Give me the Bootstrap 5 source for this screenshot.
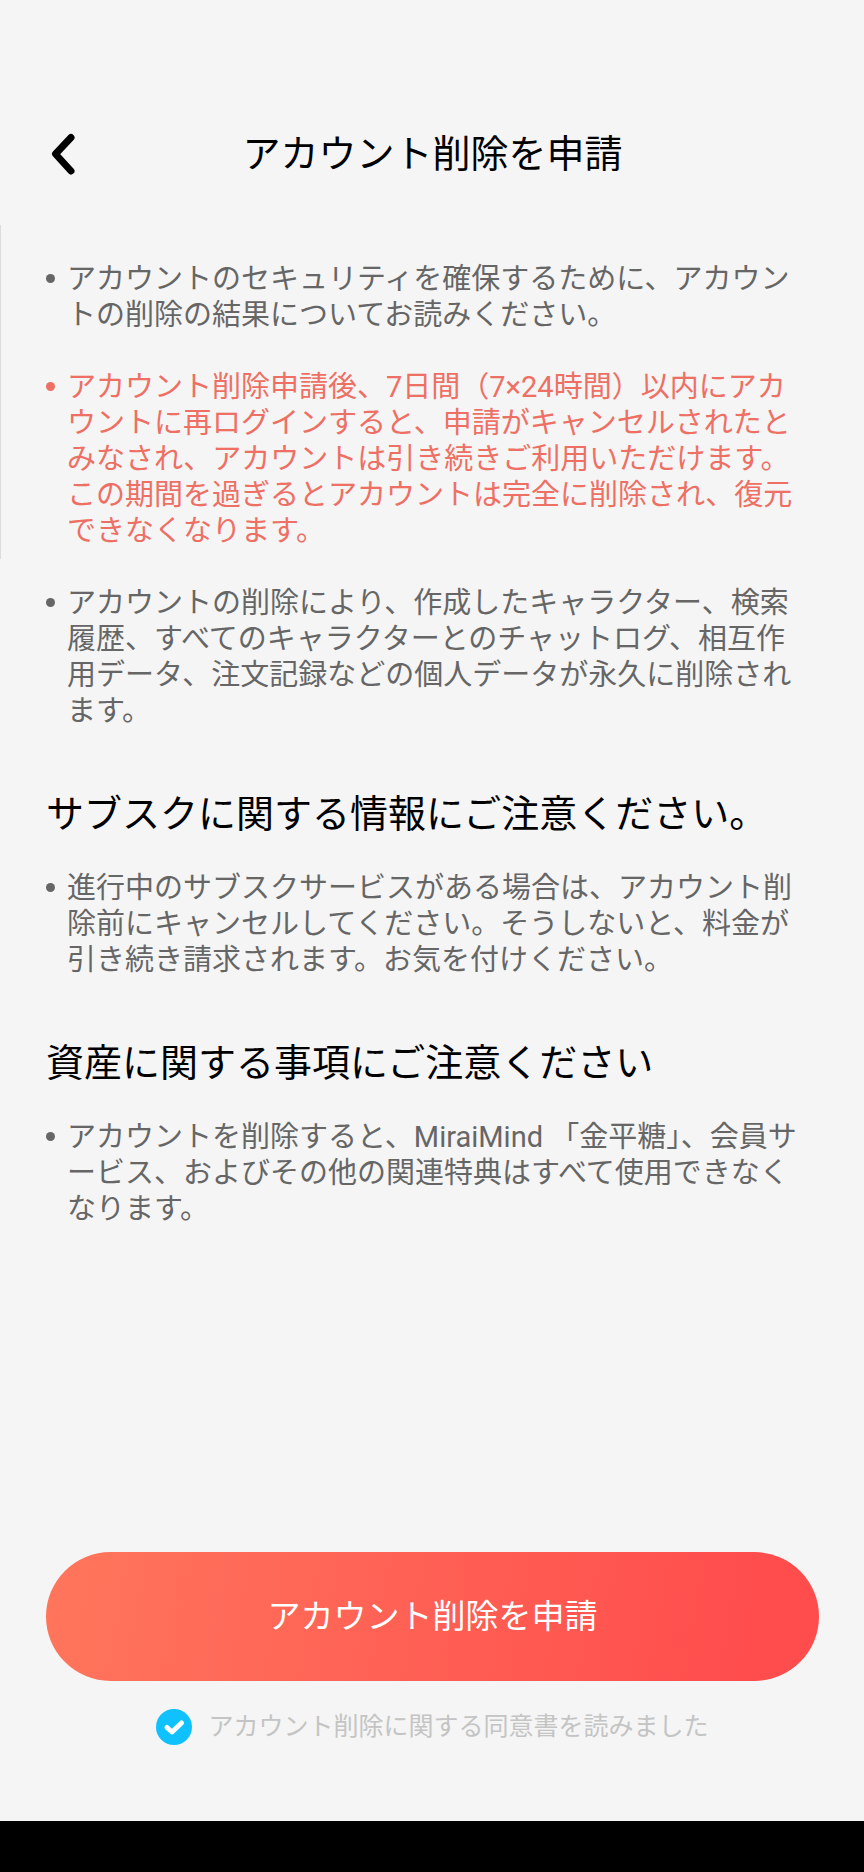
<!DOCTYPE html>
<html lang="ja">
<head>
<meta charset="utf-8">
<meta name="viewport" content="width=device-width, initial-scale=1">
<title>アカウント削除を申請</title>
<link href="https://cdn.jsdelivr.net/npm/bootstrap@5.3.0/dist/css/bootstrap.min.css" rel="stylesheet">
<style>
  body {
    background: #f5f5f5;
    color: #000;
    font-family: Roboto, "Noto Sans CJK JP", sans-serif;
  }
  .app-header {
    display: grid;
    grid-template-columns: 48px 1fr 48px;
    align-items: center;
    padding: 126px 39px 43px 40px;
  }
  .back-btn { width: 48px; height: 56px; }
  .page-title, .section-title { font-size: 38px; line-height: 56px; font-weight: 400; }
  .section-title { padding: 57px 0 28px; }
  .notice-area { padding: 36px 58px 48px 46px; }
  .scroll-thumb { top: 0; left: 0; width: 1px; height: 334px; background: #dcdcdc; }
  .notices { gap: 36px; font-size: 29px; line-height: 36px; color: #666; line-break: loose; }
  .notices li { position: relative; padding-left: 21px; }
  .notices li::before {
    content: "";
    position: absolute;
    left: 0;
    top: 13px;
    width: 9px;
    height: 9px;
    border-radius: 50%;
    background: currentColor;
  }
  .notices .warning { color: #ee6f63; }
  .app-footer { padding: 0 45px 76px 46px; }
  .submit-btn, .submit-btn:hover {
    height: 129px;
    padding: 0;
    font-size: 33px;
    color: #fff;
    border: 0;
    background: linear-gradient(100deg, #ff765c, #ff4d4d 90%);
  }
  .agree-row { gap: 16px; margin-top: 28px; font-size: 25px; line-height: 36px; color: #c4c4c4; }
  .agree-row .form-check-input {
    width: 36px;
    height: 36px;
    border: 0;
    border-radius: 50%;
  }
  .agree-row .form-check-input:checked {
    background-color: #0fc2ff;
    background-size: 100%;
    background-image: url("data:image/svg+xml,%3csvg xmlns='http://www.w3.org/2000/svg' viewBox='0 0 36 36'%3e%3cpath fill='none' stroke='%23fff' stroke-width='5' stroke-linecap='round' stroke-linejoin='round' d='M11 18.5l5 4.5L25.500 14'/%3e%3c/svg%3e");
  }
  .system-bar { height: 51px; background: #000; }
</style>
</head>
<body class="d-flex flex-column min-vh-100">
  <header class="app-header">
    <button type="button" class="btn back-btn p-0 border-0 d-flex align-items-center" aria-label="戻る">
      <svg width="48" height="48" viewBox="0 0 48 48" fill="none" stroke="#000" stroke-width="7" stroke-linecap="round" stroke-linejoin="round"><path d="M31 7.500L15.500 24L31 41"/></svg>
    </button>
    <h1 class="page-title text-center m-0">アカウント削除を申請</h1>
  </header>

  <main class="notice-area flex-grow-1 position-relative">
    <div class="scroll-thumb position-absolute"></div>
    <ul class="notices list-unstyled d-flex flex-column m-0">
      <li>アカウントのセキュリティを確保するために、アカウントの削除の結果についてお読みください。</li>
      <li class="warning">アカウント削除申請後、7日間（7×24時間）以内にアカウントに再ログインすると、申請がキャンセルされたとみなされ、アカウントは引き続きご利用いただけます。この期間を過ぎるとアカウントは完全に削除され、復元できなくなります。</li>
      <li>アカウントの削除により、作成したキャラクター、検索履歴、すべてのキャラクターとのチャットログ、相互作用データ、注文記録などの個人データが永久に削除されます。</li>
    </ul>

    <h2 class="section-title m-0">サブスクに関する情報にご注意ください。</h2>
    <ul class="notices list-unstyled d-flex flex-column m-0">
      <li>進行中のサブスクサービスがある場合は、アカウント削除前にキャンセルしてください。そうしないと、料金が引き続き請求されます。お気を付けください。</li>
    </ul>

    <h2 class="section-title m-0">資産に関する事項にご注意ください</h2>
    <ul class="notices list-unstyled d-flex flex-column m-0">
      <li>アカウントを削除すると、MiraiMind 「金平糖」、会員サービス、およびその他の関連特典はすべて使用できなくなります。</li>
    </ul>
  </main>

  <footer class="app-footer">
    <button type="button" class="btn submit-btn rounded-pill w-100">アカウント削除を申請</button>
    <div class="agree-row d-flex justify-content-center align-items-center">
      <input class="form-check-input m-0 flex-shrink-0" type="checkbox" id="agree" checked>
      <label for="agree">アカウント削除に関する同意書を読みました</label>
    </div>
  </footer>
  <div class="system-bar"></div>
<script src="https://cdn.jsdelivr.net/npm/bootstrap@5.3.0/dist/js/bootstrap.bundle.min.js"></script>
</body>
</html>
